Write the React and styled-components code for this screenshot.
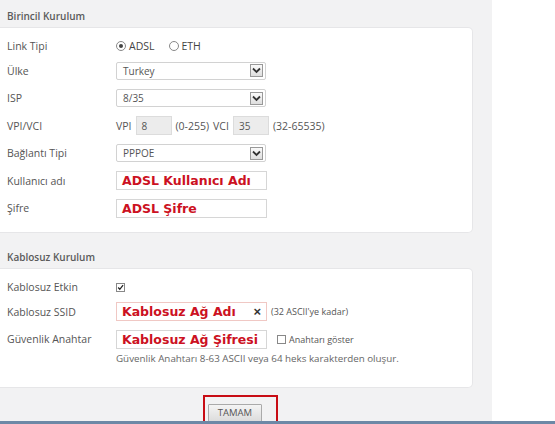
import React from 'react'
import styled, { createGlobalStyle } from 'styled-components'

const GlobalStyle = createGlobalStyle`
  html, body { margin: 0; padding: 0; background: #fff; }
  body { font-family: "Open Sans", "Liberation Sans", sans-serif; }
`

export default function App () {
  return (
    <>
      <GlobalStyle/>
      <StyledPage>
        <StyledPanel>
          <StyledSectionTitle>Birincil Kurulum</StyledSectionTitle>
          <StyledCard>
            <StyledRow $first>
              <StyledLabel>Link Tipi</StyledLabel>
              <StyledControls>
                <Radio checked>ADSL</Radio>
                <Radio>ETH</Radio>
              </StyledControls>
            </StyledRow>
            <StyledRow>
              <StyledLabel>Ülke</StyledLabel>
              <Select value='Turkey'/>
            </StyledRow>
            <StyledRow>
              <StyledLabel>ISP</StyledLabel>
              <Select value='8/35'/>
            </StyledRow>
            <StyledRow>
              <StyledLabel>VPI/VCI</StyledLabel>
              <StyledControls $gap={4}>
                <StyledText>VPI</StyledText>
                <StyledSmallInput>8</StyledSmallInput>
                <StyledText>(0-255)</StyledText>
                <StyledText>VCI</StyledText>
                <StyledSmallInput>35</StyledSmallInput>
                <StyledText>(32-65535)</StyledText>
              </StyledControls>
            </StyledRow>
            <StyledRow>
              <StyledLabel>Bağlantı Tipi</StyledLabel>
              <Select value='PPPOE'/>
            </StyledRow>
            <StyledRow>
              <StyledLabel>Kullanıcı adı</StyledLabel>
              <StyledInput>ADSL Kullanıcı Adı</StyledInput>
            </StyledRow>
            <StyledRow>
              <StyledLabel>Şifre</StyledLabel>
              <StyledInput>ADSL Şifre</StyledInput>
            </StyledRow>
          </StyledCard>

          <StyledSectionTitle>Kablosuz Kurulum</StyledSectionTitle>
          <StyledCard $second>
            <StyledRow $first>
              <StyledLabel>Kablosuz Etkin</StyledLabel>
              <Checkbox checked/>
            </StyledRow>
            <StyledRow>
              <StyledLabel>Kablosuz SSID</StyledLabel>
              <StyledControls $gap={4}>
                <StyledInput $accent>
                  Kablosuz Ağ Adı
                  <StyledClear>×</StyledClear>
                </StyledInput>
                <StyledHint>(32 ASCII&apos;ye kadar)</StyledHint>
              </StyledControls>
            </StyledRow>
            <StyledRow>
              <StyledLabel>Güvenlik Anahtar</StyledLabel>
              <StyledControls $gap={10}>
                <StyledInput>Kablosuz Ağ Şifresi</StyledInput>
                <StyledControls $gap={3}>
                  <Checkbox/>
                  <StyledHint>Anahtarı göster</StyledHint>
                </StyledControls>
              </StyledControls>
            </StyledRow>
            <StyledNote>Güvenlik Anahtarı 8-63 ASCII veya 64 heks karakterden oluşur.</StyledNote>
          </StyledCard>

          <StyledActions>
            <StyledHighlight>
              <StyledButton>TAMAM</StyledButton>
            </StyledHighlight>
          </StyledActions>
        </StyledPanel>
      </StyledPage>
      <StyledTaskbar/>
    </>
  )
}

const Radio = ({ checked, children }) => (
  <StyledRadioLabel>
    <StyledRadio $checked={checked}/>
    {children}
  </StyledRadioLabel>
)

const Select = ({ value }) => (
  <StyledSelect>
    <span>{value}</span>
    <StyledArrow>
      <svg width='9' height='7' viewBox='0 0 9 7'>
        <path d='M1 1.5 L4.5 5 L8 1.5' fill='none' stroke='#333' strokeWidth='1.8'/>
      </svg>
    </StyledArrow>
  </StyledSelect>
)

const Checkbox = ({ checked }) => (
  <StyledCheckbox>
    {checked &&
      <svg width='9' height='9' viewBox='0 0 9 9'>
        <path d='M1.5 4.5 L3.6 6.8 L7.8 1.5' fill='none' stroke='#222' strokeWidth='1.6'/>
      </svg>}
  </StyledCheckbox>
)

const StyledPage = styled.div`
  width: 555px;
  height: 421px;
  background: #fff;
  overflow: hidden;
`

const StyledPanel = styled.div`
  width: 492px;
  height: 100%;
  background: #f2f2f3;
  display: flex;
  flex-direction: column;

  & > * {
    flex-shrink: 0;
  }
`

const StyledSectionTitle = styled.div`
  height: 27px;
  display: flex;
  align-items: center;
  padding: 4px 0 0 7px;
  box-sizing: border-box;
  font-size: 10px;
  font-weight: 600;
  color: #5a5a5a;
`

const StyledCard = styled.div`
  width: 473px;
  box-sizing: border-box;
  background: #fff;
  border: 1px solid #e6e6e8;
  border-left: none;
  border-radius: 0 5px 5px 0;
  padding: ${({ $second }) => ($second ? '7px 0 22px' : '7px 0 10px')};
  margin-bottom: ${({ $second }) => ($second ? '0' : '8px')};
  display: flex;
  flex-direction: column;
`

const StyledRow = styled.div`
  display: flex;
  align-items: center;
  height: ${({ $first }) => ($first ? '22px' : '27.5px')};
`

const StyledLabel = styled.div`
  width: 116px;
  padding-left: 7px;
  box-sizing: border-box;
  font-size: 10.5px;
  color: #555;
`

const StyledControls = styled.div`
  display: flex;
  align-items: center;
  gap: ${({ $gap }) => ($gap ?? 14)}px;
`

const StyledRadioLabel = styled.label`
  display: flex;
  align-items: center;
  gap: 3px;
  font-size: 10.5px;
  color: #444;
`

const StyledRadio = styled.span`
  width: 8px;
  height: 8px;
  border-radius: 50%;
  border: 1px solid #888;
  background: #fff;
  position: relative;
  &::after {
    content: '';
    display: ${({ $checked }) => ($checked ? 'block' : 'none')};
    position: absolute;
    inset: 2px;
    border-radius: 50%;
    background: #444;
  }
`

const StyledSelect = styled.div`
  width: 150px;
  height: 18px;
  box-sizing: border-box;
  border: 1px solid #d2d2d2;
  border-radius: 2px;
  display: flex;
  align-items: center;
  justify-content: space-between;
  padding: 0 2px 0 6px;
  font-size: 10px;
  color: #555;
`

const StyledArrow = styled.span`
  width: 13px;
  height: 13px;
  box-sizing: border-box;
  border: 1px solid #999;
  background: linear-gradient(#fafafa, #dedede);
  display: flex;
  align-items: center;
  justify-content: center;
`

const StyledText = styled.span`
  font-size: 10.5px;
  color: #555;
`

const StyledSmallInput = styled.span`
  width: 36px;
  height: 19px;
  box-sizing: border-box;
  background: #ececec;
  border: 1px solid #dcdcdc;
  padding: 0 5px;
  display: flex;
  align-items: center;
  font-size: 10px;
  color: #555;
`

const StyledInput = styled.div`
  width: 151px;
  height: 19px;
  box-sizing: border-box;
  border: 1px solid ${({ $accent }) => ($accent ? '#f0c8c4' : '#d6d6d6')};
  display: flex;
  align-items: center;
  justify-content: space-between;
  padding: 0 5px;
  font-family: "DejaVu Sans", "Liberation Sans", sans-serif;
  font-weight: 700;
  font-size: 12.5px;
  color: #cc1122;
  white-space: nowrap;
`

const StyledClear = styled.span`
  font-family: "Liberation Sans", sans-serif;
  font-size: 13px;
  color: #333;
`

const StyledHint = styled.span`
  font-size: 9px;
  color: #555;
`

const StyledCheckbox = styled.span`
  width: 9px;
  height: 9px;
  box-sizing: border-box;
  border: 1px solid #888;
  background: #fff;
  display: flex;
  align-items: center;
  justify-content: center;
`

const StyledNote = styled.div`
  padding-left: 116px;
  margin-top: -1px;
  font-size: 9.8px;
  color: #666;
`

const StyledActions = styled.div`
  width: 473px;
  display: flex;
  justify-content: center;
  padding-top: 7px;
`

const StyledHighlight = styled.div`
  border: 2.5px solid #c80c14;
  border-bottom: none;
  padding: 2px 14px 8px 3px;
  margin-left: 8px;
`

const StyledButton = styled.button`
  height: 18px;
  padding: 0 9px;
  font-family: "Open Sans", sans-serif;
  font-size: 9.5px;
  color: #555;
  border: 1px solid #aaa;
  border-radius: 1px;
  background: linear-gradient(#f4f4f4, #dcdcdc);
`

const StyledTaskbar = styled.div`
  height: 3px;
  background: #6d88a6;
`
